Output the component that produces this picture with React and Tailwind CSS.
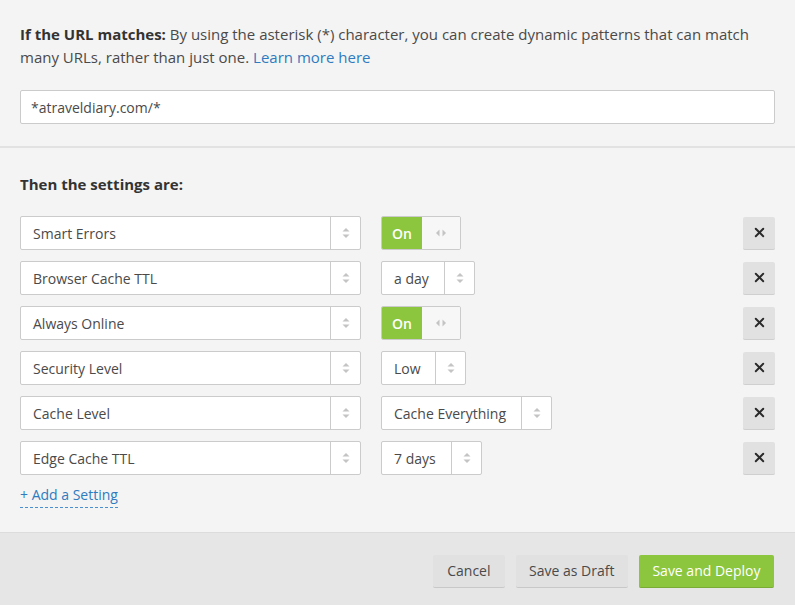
import { X } from 'lucide-react';

const settings = [
    { name: 'Smart Errors', type: 'toggle' },
    { name: 'Browser Cache TTL', type: 'select', value: 'a day', w: 'w-[94px]' },
    { name: 'Always Online', type: 'toggle' },
    { name: 'Security Level', type: 'select', value: 'Low', w: 'w-[85px]' },
    { name: 'Cache Level', type: 'select', value: 'Cache Everything', w: 'w-[171px]' },
    { name: 'Edge Cache TTL', type: 'select', value: '7 days', w: 'w-[101px]' },
];

function UpDown() {
    return (
        <svg width="8" height="12" viewBox="0 0 8 12" className="text-[#c4c4c4]">
            <path d="M4 1 L7.5 4.5 H0.5 Z" fill="currentColor" />
            <path d="M4 11 L7.5 7.5 H0.5 Z" fill="currentColor" />
        </svg>
    );
}

function LeftRight() {
    return (
        <svg width="12" height="8" viewBox="0 0 12 8" className="text-[#c4c4c4]">
            <path d="M1 4 L4.5 0.5 V7.5 Z" fill="currentColor" />
            <path d="M11 4 L7.5 0.5 V7.5 Z" fill="currentColor" />
        </svg>
    );
}

function Select({ value, className }) {
    return (
        <div className={`h-[34px] flex bg-white border border-[#cbcbcb] rounded-[2px] ${className}`}>
            <div className="flex-1 flex items-center pl-[12px] text-[14px] text-[#4a4a4a] truncate">{value}</div>
            <div className="w-[30px] border-l border-[#cbcbcb] flex items-center justify-center">
                <UpDown />
            </div>
        </div>
    );
}

function Toggle() {
    return (
        <div className="h-[34px] w-[80px] flex border border-[#cbcbcb] rounded-[2px] overflow-hidden">
            <div className="w-[40px] bg-[#8cc63e] text-white text-[14px] font-semibold flex items-center justify-center">On</div>
            <div className="flex-1 bg-[#f7f7f7] flex items-center justify-center">
                <LeftRight />
            </div>
        </div>
    );
}

export default function App() {
    return (
        <div className="w-[795px] h-[605px] flex flex-col bg-[#f4f4f4] text-[#4a4a4a] font-['Open_Sans',sans-serif] overflow-hidden">
            {/* URL match */}
            <div className="px-[20px] pt-[23px] pb-[22px] border-b-2 border-[#e2e2e2]">
                <p className="text-[15px] leading-[23px] text-[#4a4a4a]">
                    <span className="font-bold text-[#333]">If the URL matches:</span> By using the asterisk (*) character, you can create dynamic patterns that can match many URLs, rather than just one.{' '}
                    <a className="text-[#2f7bbf]">Learn more here</a>
                </p>
                <div className="mt-[21px] h-[34px] bg-white border border-[#cbcbcb] rounded-[2px] flex items-center px-[10px] text-[14px] text-[#4a4a4a]">
                    *atraveldiary.com/*
                </div>
            </div>

            {/* Settings */}
            <div className="flex-1 px-[20px] pt-[25px] border-b border-[#dcdcdc]">
                <h2 className="text-[15px] leading-[23px] font-bold text-[#333]">Then the settings are:</h2>
                <div className="mt-[20px] flex flex-col gap-[11px]">
                    {settings.map(s => (
                        <div key={s.name} className="flex items-center">
                            <Select value={s.name} className="w-[341px]" />
                            <div className="ml-[20px] flex-1">
                                {s.type === 'toggle' ? <Toggle /> : <Select value={s.value} className={s.w} />}
                            </div>
                            <button className="w-[32px] h-[33px] bg-[#e1e1e1] border-b border-[#cfcfcf] rounded-[2px] flex items-center justify-center text-[#2a2a2a]">
                                <X size={15} strokeWidth={3} />
                            </button>
                        </div>
                    ))}
                </div>
                <a className="inline-block mt-[10px] text-[14px] leading-[20px] text-[#2f7bbf] border-b border-dashed border-[#4a8fd0] pb-[2px]">
                    + Add a Setting
                </a>
            </div>

            {/* Footer */}
            <div className="h-[72px] bg-[#e6e6e6] flex items-center justify-end gap-[11px] px-[21px] pt-[4px]">
                <button className="h-[33px] px-[14px] bg-[#e1e1e1] border-b border-[#c8c8c8] rounded-[2px] text-[14px] text-[#4a4a4a]">Cancel</button>
                <button className="h-[33px] px-[13.5px] bg-[#e1e1e1] border-b border-[#c8c8c8] rounded-[2px] text-[14px] text-[#4a4a4a]">Save as Draft</button>
                <button className="h-[33px] px-[13.5px] bg-[#8cc63e] border-b border-[#7aab36] rounded-[2px] text-[14px] text-white">Save and Deploy</button>
            </div>
        </div>
    );
}
